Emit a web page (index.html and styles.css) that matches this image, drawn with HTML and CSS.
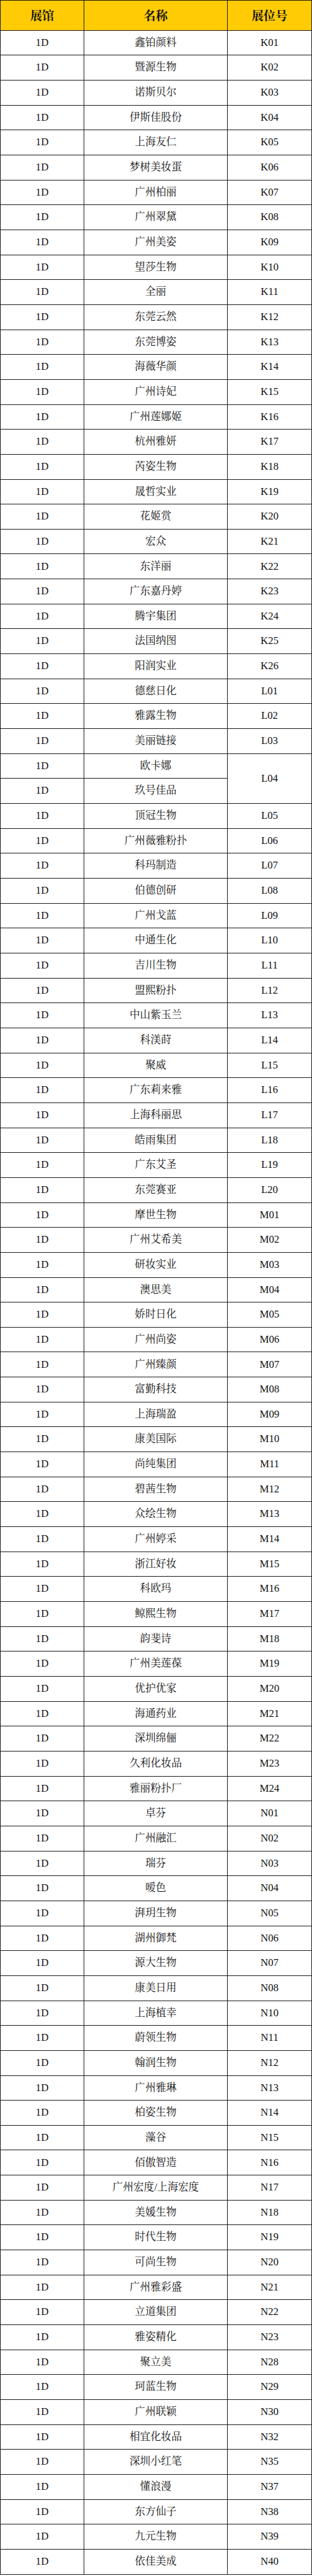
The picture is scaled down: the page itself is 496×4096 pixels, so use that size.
FILE: index.html
```html
<!DOCTYPE html>
<html lang="zh-CN">
<head>
<meta charset="utf-8">
<title>展位表</title>
<link rel="stylesheet" href="styles.css">
</head>
<body>
<div class="sheet">
  <div class="cell head">展馆</div><div class="cell head">名称</div><div class="cell head">展位号</div>
  <div class="cell">1D</div><div class="cell">鑫铂颜料</div><div class="cell">K01</div>
  <div class="cell">1D</div><div class="cell">暨源生物</div><div class="cell">K02</div>
  <div class="cell">1D</div><div class="cell">诺斯贝尔</div><div class="cell">K03</div>
  <div class="cell">1D</div><div class="cell">伊斯佳股份</div><div class="cell">K04</div>
  <div class="cell">1D</div><div class="cell">上海友仁</div><div class="cell">K05</div>
  <div class="cell">1D</div><div class="cell">梦树美妆蛋</div><div class="cell">K06</div>
  <div class="cell">1D</div><div class="cell">广州柏丽</div><div class="cell">K07</div>
  <div class="cell">1D</div><div class="cell">广州翠黛</div><div class="cell">K08</div>
  <div class="cell">1D</div><div class="cell">广州美姿</div><div class="cell">K09</div>
  <div class="cell">1D</div><div class="cell">望莎生物</div><div class="cell">K10</div>
  <div class="cell">1D</div><div class="cell">全丽</div><div class="cell">K11</div>
  <div class="cell">1D</div><div class="cell">东莞云然</div><div class="cell">K12</div>
  <div class="cell">1D</div><div class="cell">东莞博姿</div><div class="cell">K13</div>
  <div class="cell">1D</div><div class="cell">海薇华颜</div><div class="cell">K14</div>
  <div class="cell">1D</div><div class="cell">广州诗妃</div><div class="cell">K15</div>
  <div class="cell">1D</div><div class="cell">广州莲娜姬</div><div class="cell">K16</div>
  <div class="cell">1D</div><div class="cell">杭州雅妍</div><div class="cell">K17</div>
  <div class="cell">1D</div><div class="cell">芮姿生物</div><div class="cell">K18</div>
  <div class="cell">1D</div><div class="cell">晟哲实业</div><div class="cell">K19</div>
  <div class="cell">1D</div><div class="cell">花姬赏</div><div class="cell">K20</div>
  <div class="cell">1D</div><div class="cell">宏众</div><div class="cell">K21</div>
  <div class="cell">1D</div><div class="cell">东洋丽</div><div class="cell">K22</div>
  <div class="cell">1D</div><div class="cell">广东嘉丹婷</div><div class="cell">K23</div>
  <div class="cell">1D</div><div class="cell">腾宇集团</div><div class="cell">K24</div>
  <div class="cell">1D</div><div class="cell">法国纳图</div><div class="cell">K25</div>
  <div class="cell">1D</div><div class="cell">阳润实业</div><div class="cell">K26</div>
  <div class="cell">1D</div><div class="cell">德慈日化</div><div class="cell">L01</div>
  <div class="cell">1D</div><div class="cell">雅露生物</div><div class="cell">L02</div>
  <div class="cell">1D</div><div class="cell">美丽链接</div><div class="cell">L03</div>
  <div class="cell">1D</div><div class="cell">欧卡娜</div><div class="cell span2">L04</div>
  <div class="cell">1D</div><div class="cell">玖号佳品</div>
  <div class="cell">1D</div><div class="cell">顶冠生物</div><div class="cell">L05</div>
  <div class="cell">1D</div><div class="cell">广州薇雅粉扑</div><div class="cell">L06</div>
  <div class="cell">1D</div><div class="cell">科玛制造</div><div class="cell">L07</div>
  <div class="cell">1D</div><div class="cell">伯德创研</div><div class="cell">L08</div>
  <div class="cell">1D</div><div class="cell">广州戈蓝</div><div class="cell">L09</div>
  <div class="cell">1D</div><div class="cell">中通生化</div><div class="cell">L10</div>
  <div class="cell">1D</div><div class="cell">吉川生物</div><div class="cell">L11</div>
  <div class="cell">1D</div><div class="cell">盟熙粉扑</div><div class="cell">L12</div>
  <div class="cell">1D</div><div class="cell">中山紫玉兰</div><div class="cell">L13</div>
  <div class="cell">1D</div><div class="cell">科渼莳</div><div class="cell">L14</div>
  <div class="cell">1D</div><div class="cell">聚威</div><div class="cell">L15</div>
  <div class="cell">1D</div><div class="cell">广东莉来雅</div><div class="cell">L16</div>
  <div class="cell">1D</div><div class="cell">上海科丽思</div><div class="cell">L17</div>
  <div class="cell">1D</div><div class="cell">皓雨集团</div><div class="cell">L18</div>
  <div class="cell">1D</div><div class="cell">广东艾圣</div><div class="cell">L19</div>
  <div class="cell">1D</div><div class="cell">东莞赛亚</div><div class="cell">L20</div>
  <div class="cell">1D</div><div class="cell">摩世生物</div><div class="cell">M01</div>
  <div class="cell">1D</div><div class="cell">广州艾希美</div><div class="cell">M02</div>
  <div class="cell">1D</div><div class="cell">研妆实业</div><div class="cell">M03</div>
  <div class="cell">1D</div><div class="cell">澳思美</div><div class="cell">M04</div>
  <div class="cell">1D</div><div class="cell">娇时日化</div><div class="cell">M05</div>
  <div class="cell">1D</div><div class="cell">广州尚姿</div><div class="cell">M06</div>
  <div class="cell">1D</div><div class="cell">广州臻颜</div><div class="cell">M07</div>
  <div class="cell">1D</div><div class="cell">富勤科技</div><div class="cell">M08</div>
  <div class="cell">1D</div><div class="cell">上海瑞盈</div><div class="cell">M09</div>
  <div class="cell">1D</div><div class="cell">康美国际</div><div class="cell">M10</div>
  <div class="cell">1D</div><div class="cell">尚纯集团</div><div class="cell">M11</div>
  <div class="cell">1D</div><div class="cell">碧茜生物</div><div class="cell">M12</div>
  <div class="cell">1D</div><div class="cell">众绘生物</div><div class="cell">M13</div>
  <div class="cell">1D</div><div class="cell">广州婷采</div><div class="cell">M14</div>
  <div class="cell">1D</div><div class="cell">浙江好妆</div><div class="cell">M15</div>
  <div class="cell">1D</div><div class="cell">科欧玛</div><div class="cell">M16</div>
  <div class="cell">1D</div><div class="cell">鲸熙生物</div><div class="cell">M17</div>
  <div class="cell">1D</div><div class="cell">韵斐诗</div><div class="cell">M18</div>
  <div class="cell">1D</div><div class="cell">广州美莲葆</div><div class="cell">M19</div>
  <div class="cell">1D</div><div class="cell">优护优家</div><div class="cell">M20</div>
  <div class="cell">1D</div><div class="cell">海通药业</div><div class="cell">M21</div>
  <div class="cell">1D</div><div class="cell">深圳绵俪</div><div class="cell">M22</div>
  <div class="cell">1D</div><div class="cell">久利化妆品</div><div class="cell">M23</div>
  <div class="cell">1D</div><div class="cell">雅丽粉扑厂</div><div class="cell">M24</div>
  <div class="cell">1D</div><div class="cell">卓芬</div><div class="cell">N01</div>
  <div class="cell">1D</div><div class="cell">广州融汇</div><div class="cell">N02</div>
  <div class="cell">1D</div><div class="cell">瑞芬</div><div class="cell">N03</div>
  <div class="cell">1D</div><div class="cell">嗳色</div><div class="cell">N04</div>
  <div class="cell">1D</div><div class="cell">湃玥生物</div><div class="cell">N05</div>
  <div class="cell">1D</div><div class="cell">湖州御梵</div><div class="cell">N06</div>
  <div class="cell">1D</div><div class="cell">源大生物</div><div class="cell">N07</div>
  <div class="cell">1D</div><div class="cell">康美日用</div><div class="cell">N08</div>
  <div class="cell">1D</div><div class="cell">上海植幸</div><div class="cell">N10</div>
  <div class="cell">1D</div><div class="cell">蔚领生物</div><div class="cell">N11</div>
  <div class="cell">1D</div><div class="cell">翰润生物</div><div class="cell">N12</div>
  <div class="cell">1D</div><div class="cell">广州雅琳</div><div class="cell">N13</div>
  <div class="cell">1D</div><div class="cell">柏姿生物</div><div class="cell">N14</div>
  <div class="cell">1D</div><div class="cell">藻谷</div><div class="cell">N15</div>
  <div class="cell">1D</div><div class="cell">佰傲智造</div><div class="cell">N16</div>
  <div class="cell">1D</div><div class="cell">广州宏度/上海宏度</div><div class="cell">N17</div>
  <div class="cell">1D</div><div class="cell">美媛生物</div><div class="cell">N18</div>
  <div class="cell">1D</div><div class="cell">时代生物</div><div class="cell">N19</div>
  <div class="cell">1D</div><div class="cell">可尚生物</div><div class="cell">N20</div>
  <div class="cell">1D</div><div class="cell">广州雅彩盛</div><div class="cell">N21</div>
  <div class="cell">1D</div><div class="cell">立道集团</div><div class="cell">N22</div>
  <div class="cell">1D</div><div class="cell">雅姿精化</div><div class="cell">N23</div>
  <div class="cell">1D</div><div class="cell">聚立美</div><div class="cell">N28</div>
  <div class="cell">1D</div><div class="cell">珂蓝生物</div><div class="cell">N29</div>
  <div class="cell">1D</div><div class="cell">广州联颖</div><div class="cell">N30</div>
  <div class="cell">1D</div><div class="cell">相宜化妆品</div><div class="cell">N32</div>
  <div class="cell">1D</div><div class="cell">深圳小红笔</div><div class="cell">N35</div>
  <div class="cell">1D</div><div class="cell">懂浪漫</div><div class="cell">N37</div>
  <div class="cell">1D</div><div class="cell">东方仙子</div><div class="cell">N38</div>
  <div class="cell">1D</div><div class="cell">九元生物</div><div class="cell">N39</div>
  <div class="cell">1D</div><div class="cell">依佳美成</div><div class="cell">N40</div>
</div>
</body>
</html>
```
FILE: styles.css
```css
html, body {
  margin: 0;
  padding: 0;
  background: #ffffff;
}

.sheet {
  box-sizing: border-box;
  width: 496px;
  display: grid;
  grid-template-columns: 133px 228px 1fr;
  grid-template-rows: 47.7px;
  grid-auto-rows: 39.66px;
  border-top: 1px solid #1a1a1a;
  border-left: 1px solid #1a1a1a;
  font-family: "Liberation Serif", "Noto Serif CJK SC", "Noto Sans CJK SC", serif;
  font-size: 16.6px;
  color: #111111;
}

.cell {
  box-sizing: border-box;
  display: flex;
  align-items: center;
  justify-content: center;
  border-right: 1px solid #1a1a1a;
  border-bottom: 1px solid #1a1a1a;
  white-space: nowrap;
  line-height: 1;
}

.head {
  background: #fecb05;
  font-weight: bold;
  font-size: 19px;
  padding-top: 3px;
}

.span2 {
  grid-row: span 2;
}
```
